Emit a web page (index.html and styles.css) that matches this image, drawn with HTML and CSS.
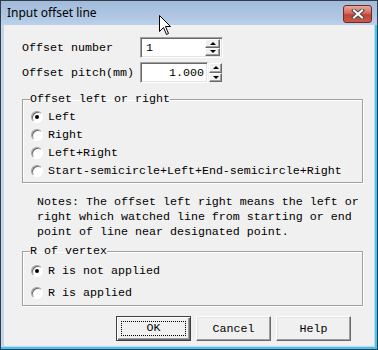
FILE: index.html
```html
<!DOCTYPE html>
<html lang="en">
<head>
  <meta charset="UTF-8" />
  <title>Input offset line</title>
  <link rel="stylesheet" href="styles.css">
</head>
<body>

  <div class="window">

    <!-- Barra de titulo -->
    <div class="title-bar">
      <span class="title">Input offset line</span>
      <button class="close-btn" aria-label="Close">
        <svg width="14" height="10" viewBox="0 0 14 10">
          <path d="M3 1.5 L11 8.5 M11 1.5 L3 8.5" stroke="#4a4a4a" stroke-width="4" stroke-linecap="square" fill="none"/>
          <path d="M3 1.5 L11 8.5 M11 1.5 L3 8.5" stroke="#ffffff" stroke-width="2" stroke-linecap="square" fill="none"/>
        </svg>
      </button>
    </div>

    <!-- Contenido del dialogo -->
    <div class="client">

      <div class="fields">
        <label class="field-label">Offset number</label>
        <div class="edit edit-wide">
          <span class="edit-text">1</span>
          <div class="spin">
            <span class="spin-btn"><i class="arrow-up"></i></span>
            <span class="spin-btn"><i class="arrow-down"></i></span>
          </div>
        </div>

        <label class="field-label">Offset pitch(mm)</label>
        <div class="edit-group">
          <div class="edit edit-narrow">
            <span class="edit-text right">1.000</span>
          </div>
          <div class="spin spin-outside">
            <span class="spin-btn"><i class="arrow-up"></i></span>
            <span class="spin-btn"><i class="arrow-down"></i></span>
          </div>
        </div>
      </div>

      <fieldset class="group group-side">
        <legend>Offset left or right</legend>
        <div class="radio-row"><span class="radio checked"></span>Left</div>
        <div class="radio-row"><span class="radio"></span>Right</div>
        <div class="radio-row"><span class="radio"></span>Left+Right</div>
        <div class="radio-row"><span class="radio"></span>Start-semicircle+Left+End-semicircle+Right</div>
      </fieldset>

      <p class="notes">
        Notes: The offset left right means the left or<br>
        right which watched line from starting or end<br>
        point of line near designated point.
      </p>

      <fieldset class="group group-vertex">
        <legend>R of vertex</legend>
        <div class="radio-row tall"><span class="radio checked"></span>R is not applied</div>
        <div class="radio-row tall"><span class="radio"></span>R is applied</div>
      </fieldset>

      <div class="buttons">
        <button class="btn btn-default"><span class="focus">OK</span></button>
        <button class="btn">Cancel</button>
        <button class="btn">Help</button>
      </div>

    </div>

    <!-- Puntero del raton -->
    <svg class="cursor" width="13" height="21" viewBox="0 0 13 21">
      <path d="M0.5 0.5 L0.5 16.5 L4.5 12.5 L7.5 19.5 L9.5 18.5 L6.5 11.5 L11.5 11.5 Z" fill="#ffffff" stroke="#000000" stroke-width="1"/>
    </svg>

  </div>

</body>
</html>
```

FILE: styles.css
```css
body {
  margin: 0;
  background-color: #f0f0f0;
}

/* Ventana */
.window {
  position: relative;
  width: 376px;
  height: 348px;
  border: 1px solid #2f3d4f;
  background-color: #c3d6ec;
  box-shadow: inset -2px -2px 0 #3ec6ee;
  display: flex;
  flex-direction: column;
}

/* Barra de titulo */
.title-bar {
  height: 24px;
  display: flex;
  align-items: flex-start;
  justify-content: space-between;
  padding: 0 5px 0 6px;
  background: linear-gradient(#a1bbd9, #b0c8e4 70%, #bcd1ea);
}

.title {
  font-family: "Segoe UI", "Noto Sans", sans-serif;
  font-size: 12px;
  line-height: 24px;
  color: #000000;
}

.close-btn {
  margin-top: 4px;
  width: 29px;
  height: 18px;
  padding: 0;
  border: 1px solid #6e2a26;
  border-radius: 3px;
  background: linear-gradient(#e8a99f, #d4695c 45%, #c24336 55%, #c95a4a);
  display: flex;
  align-items: center;
  justify-content: center;
}

/* Area del dialogo */
.client {
  flex: 1;
  margin: 0 3px 3px 3px;
  background-color: #f0f0f0;
  font-family: "Liberation Mono", "Courier New", monospace;
  font-size: 11.67px;
  color: #000000;
  padding-top: 12px;
  border-left: 0;
}

.fields {
  display: grid;
  grid-template-columns: 118px auto;
  row-gap: 4px;
  padding-left: 18px;
  align-items: center;
}

.field-label {
  line-height: 14px;
}

.edit {
  height: 19px;
  background-color: #ffffff;
  border: 1px solid;
  border-color: #a0a0a0 #ffffff #ffffff #a0a0a0;
  box-shadow: inset 1px 1px 0 #696969, inset -1px -1px 0 #e3e3e3;
  display: flex;
  align-items: center;
  padding: 0 2px;
  box-sizing: border-box;
}

.edit-wide {
  width: 83px;
  height: 21px;
  padding-right: 2px;
}

.edit-group {
  display: flex;
  gap: 1px;
  height: 21px;
}

.edit-narrow {
  width: 68px;
  height: 21px;
}

.edit-text {
  flex: 1;
  padding-left: 3px;
  line-height: 14px;
}

.edit-text.right {
  text-align: right;
  padding-right: 1px;
}

/* Botones del spinner */
.spin {
  width: 15px;
  height: 17px;
  display: flex;
  flex-direction: column;
}

.spin-outside {
  width: 13px;
  height: 21px;
  padding: 1px 0;
  box-sizing: border-box;
}

.spin-btn {
  flex: 1;
  background-color: #f0f0f0;
  border: 1px solid;
  border-color: #ffffff #696969 #696969 #ffffff;
  box-shadow: inset -1px -1px 0 #a0a0a0;
  display: flex;
  align-items: center;
  justify-content: center;
}

.arrow-up {
  width: 0;
  height: 0;
  border-left: 3px solid transparent;
  border-right: 3px solid transparent;
  border-bottom: 3px solid #000000;
}

.arrow-down {
  width: 0;
  height: 0;
  border-left: 3px solid transparent;
  border-right: 3px solid transparent;
  border-top: 3px solid #000000;
}

/* Grupos */
.group {
  margin: 9px 11px 0 18px;
  padding: 2px 0 2px 7px;
  border: 1px solid #a0a0a0;
  box-shadow: inset 1px 1px 0 #ffffff, 1px 1px 0 #ffffff;
}

.group legend {
  padding: 0;
  line-height: 14px;
}

.group-vertex {
  margin-top: 4px;
  padding-bottom: 1px;
}

.radio-row {
  height: 18px;
  display: flex;
  align-items: center;
  gap: 5px;
  padding-left: 1px;
}

.radio-row.tall {
  height: 22px;
}

.radio {
  width: 12px;
  height: 12px;
  border-radius: 50%;
  box-sizing: border-box;
  background-color: #ffffff;
  border: 1px solid;
  border-color: #a0a0a0 #ffffff #ffffff #a0a0a0;
  box-shadow: inset 1px 1px 0 #696969;
  display: flex;
  align-items: center;
  justify-content: center;
}

.radio.checked::after {
  content: "";
  width: 4px;
  height: 4px;
  border-radius: 50%;
  background-color: #000000;
}

/* Notas */
.notes {
  margin: 12px 0 0 33px;
  line-height: 15px;
}

/* Botones */
.buttons {
  display: flex;
  justify-content: flex-end;
  gap: 5px;
  margin-top: 10px;
  padding-right: 23px;
}

.btn {
  width: 75px;
  height: 25px;
  padding: 0;
  font-family: inherit;
  font-size: inherit;
  color: #000000;
  background-color: #f0f0f0;
  border: 1px solid;
  border-color: #ffffff #696969 #696969 #ffffff;
  box-shadow: inset -1px -1px 0 #a0a0a0, inset 1px 1px 0 #e3e3e3;
}

.btn-default {
  border: 1px solid #404040;
  box-shadow: inset 1px 1px 0 #ffffff, inset -1px -1px 0 #696969, inset -2px -2px 0 #a0a0a0;
  display: flex;
  padding: 4px;
}

.btn-default .focus {
  flex: 1;
  border: 1px dotted #000000;
  line-height: 13px;
}

/* Puntero */
.cursor {
  position: absolute;
  left: 158px;
  top: 14px;
}
```
